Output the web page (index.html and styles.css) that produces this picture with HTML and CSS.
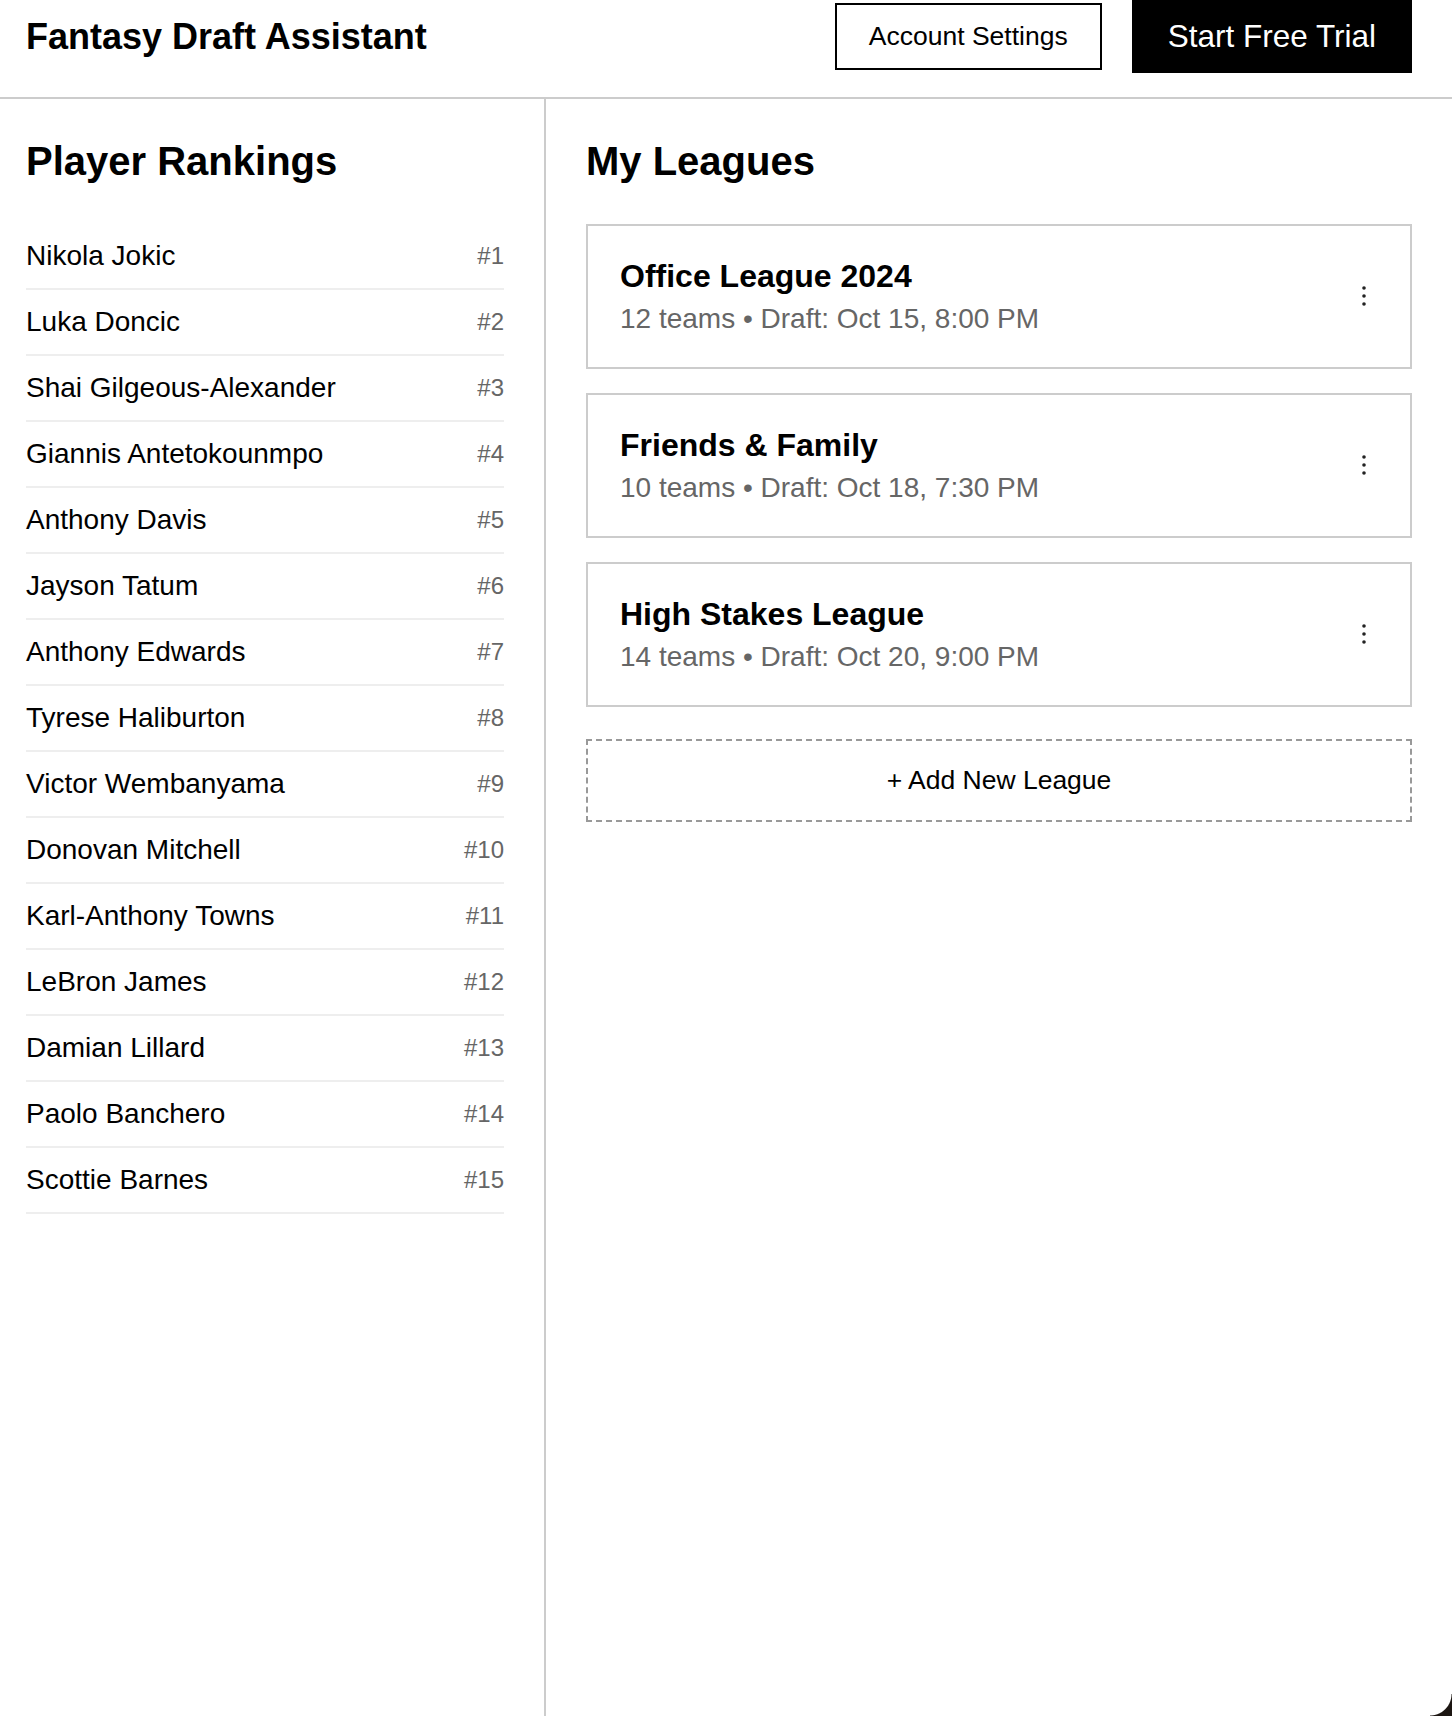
FILE: index.html
```html
<!DOCTYPE html>
<html lang="en">
<head>
<meta charset="utf-8">
<title>Fantasy Draft Assistant</title>
<link rel="stylesheet" href="styles.css">
</head>
<body>
<header class="topbar">
  <div class="topbar-inner">
    <h1 class="brand">Fantasy Draft Assistant</h1>
    <div class="actions">
      <button class="btn btn-outline">Account Settings</button>
      <button class="btn btn-solid">Start Free Trial</button>
    </div>
  </div>
</header>
<main class="layout">
  <section class="rankings">
    <h2 class="section-title">Player Rankings</h2>
    <ul class="player-list">
      <li class="player"><span class="name">Nikola Jokic</span><span class="rank">#1</span></li>
      <li class="player"><span class="name">Luka Doncic</span><span class="rank">#2</span></li>
      <li class="player"><span class="name">Shai Gilgeous-Alexander</span><span class="rank">#3</span></li>
      <li class="player"><span class="name">Giannis Antetokounmpo</span><span class="rank">#4</span></li>
      <li class="player"><span class="name">Anthony Davis</span><span class="rank">#5</span></li>
      <li class="player"><span class="name">Jayson Tatum</span><span class="rank">#6</span></li>
      <li class="player"><span class="name">Anthony Edwards</span><span class="rank">#7</span></li>
      <li class="player"><span class="name">Tyrese Haliburton</span><span class="rank">#8</span></li>
      <li class="player"><span class="name">Victor Wembanyama</span><span class="rank">#9</span></li>
      <li class="player"><span class="name">Donovan Mitchell</span><span class="rank">#10</span></li>
      <li class="player"><span class="name">Karl-Anthony Towns</span><span class="rank">#11</span></li>
      <li class="player"><span class="name">LeBron James</span><span class="rank">#12</span></li>
      <li class="player"><span class="name">Damian Lillard</span><span class="rank">#13</span></li>
      <li class="player"><span class="name">Paolo Banchero</span><span class="rank">#14</span></li>
      <li class="player"><span class="name">Scottie Barnes</span><span class="rank">#15</span></li>
    </ul>
  </section>
  <section class="leagues">
    <h2 class="section-title">My Leagues</h2>
    <div class="league-list">
      <div class="league-card">
        <div class="league-info">
          <div class="league-name">Office League 2024</div>
          <div class="league-meta">12 teams • Draft: Oct 15, 8:00 PM</div>
        </div>
        <button class="menu-btn" aria-label="More options">
          <svg width="6" height="22" viewBox="0 0 6 22"><circle cx="3" cy="3" r="1.8"/><circle cx="3" cy="11" r="1.8"/><circle cx="3" cy="19" r="1.8"/></svg>
        </button>
      </div>
      <div class="league-card">
        <div class="league-info">
          <div class="league-name">Friends &amp; Family</div>
          <div class="league-meta">10 teams • Draft: Oct 18, 7:30 PM</div>
        </div>
        <button class="menu-btn" aria-label="More options">
          <svg width="6" height="22" viewBox="0 0 6 22"><circle cx="3" cy="3" r="1.8"/><circle cx="3" cy="11" r="1.8"/><circle cx="3" cy="19" r="1.8"/></svg>
        </button>
      </div>
      <div class="league-card">
        <div class="league-info">
          <div class="league-name">High Stakes League</div>
          <div class="league-meta">14 teams • Draft: Oct 20, 9:00 PM</div>
        </div>
        <button class="menu-btn" aria-label="More options">
          <svg width="6" height="22" viewBox="0 0 6 22"><circle cx="3" cy="3" r="1.8"/><circle cx="3" cy="11" r="1.8"/><circle cx="3" cy="19" r="1.8"/></svg>
        </button>
      </div>
    </div>
    <button class="add-league">+ Add New League</button>
  </section>
</main>
<div class="window-corner"></div>
</body>
</html>
```
FILE: styles.css
```css
* { box-sizing: border-box; }
html, body { margin: 0; padding: 0; }
body {
  font-family: "Liberation Sans", Arial, Helvetica, sans-serif;
  color: #000;
  background: #fff;
  min-height: 100vh;
  display: flex;
  flex-direction: column;
}
.topbar {
  height: 99px;
  border-bottom: 2px solid #cccccc;
  padding: 0 40px 0 26px;
}
.topbar-inner {
  height: 73px;
  display: flex;
  align-items: center;
  justify-content: space-between;
}
.brand {
  margin: 0;
  font-size: 36px;
  font-weight: 700;
  line-height: 1.15;
}
.actions {
  display: flex;
  align-items: center;
  gap: 30px;
}
.btn {
  font-family: inherit;
  line-height: 1.15;
  cursor: pointer;
  border: 2px solid #000;
  margin: 0;
}
.btn-outline {
  background: #fff;
  color: #000;
  font-size: 26.5px;
  padding: 16px 32px;
}
.btn-solid {
  background: #000;
  color: #fff;
  font-size: 31.5px;
  padding: 16px 34px;
}
.layout {
  flex: 1;
  display: grid;
  grid-template-columns: 546px 1fr;
}
.rankings {
  border-right: 2px solid #cccccc;
  padding: 39px 40px 40px 26px;
}
.leagues {
  padding: 39px 40px 40px 40px;
}
.section-title {
  margin: 0 0 40px 0;
  font-size: 40px;
  font-weight: 700;
  line-height: 1.15;
}
.player-list {
  list-style: none;
  margin: 0;
  padding: 0;
}
.player {
  display: flex;
  justify-content: space-between;
  align-items: center;
  height: 66px;
  border-bottom: 2px solid #eeeeee;
}
.name {
  font-size: 28px;
  line-height: 1.15;
}
.rank {
  font-size: 24px;
  color: #666666;
}
.league-list {
  display: flex;
  flex-direction: column;
  gap: 24px;
}
.league-card {
  border: 2px solid #cccccc;
  padding: 32px 30px 32px 32px;
  display: flex;
  align-items: center;
  justify-content: space-between;
}
.league-info {
  display: flex;
  flex-direction: column;
  gap: 8px;
}
.league-name {
  font-size: 32px;
  font-weight: 700;
  line-height: 1.15;
}
.league-meta {
  font-size: 28px;
  color: #666666;
  line-height: 1.15;
}
.menu-btn {
  background: none;
  border: none;
  padding: 0;
  width: 32px;
  height: 32px;
  display: flex;
  align-items: center;
  justify-content: center;
  fill: #222222;
  cursor: pointer;
}
.add-league {
  margin-top: 32px;
  width: 100%;
  height: 83px;
  background: #fff;
  border: 2px dashed #999999;
  font-family: inherit;
  font-size: 26.5px;
  color: #000;
  cursor: pointer;
}
.window-corner {
  position: fixed;
  right: 0;
  bottom: 0;
  width: 22px;
  height: 22px;
  background: radial-gradient(circle at 0 0, transparent 21px, #1c1612 22px);
}
```
